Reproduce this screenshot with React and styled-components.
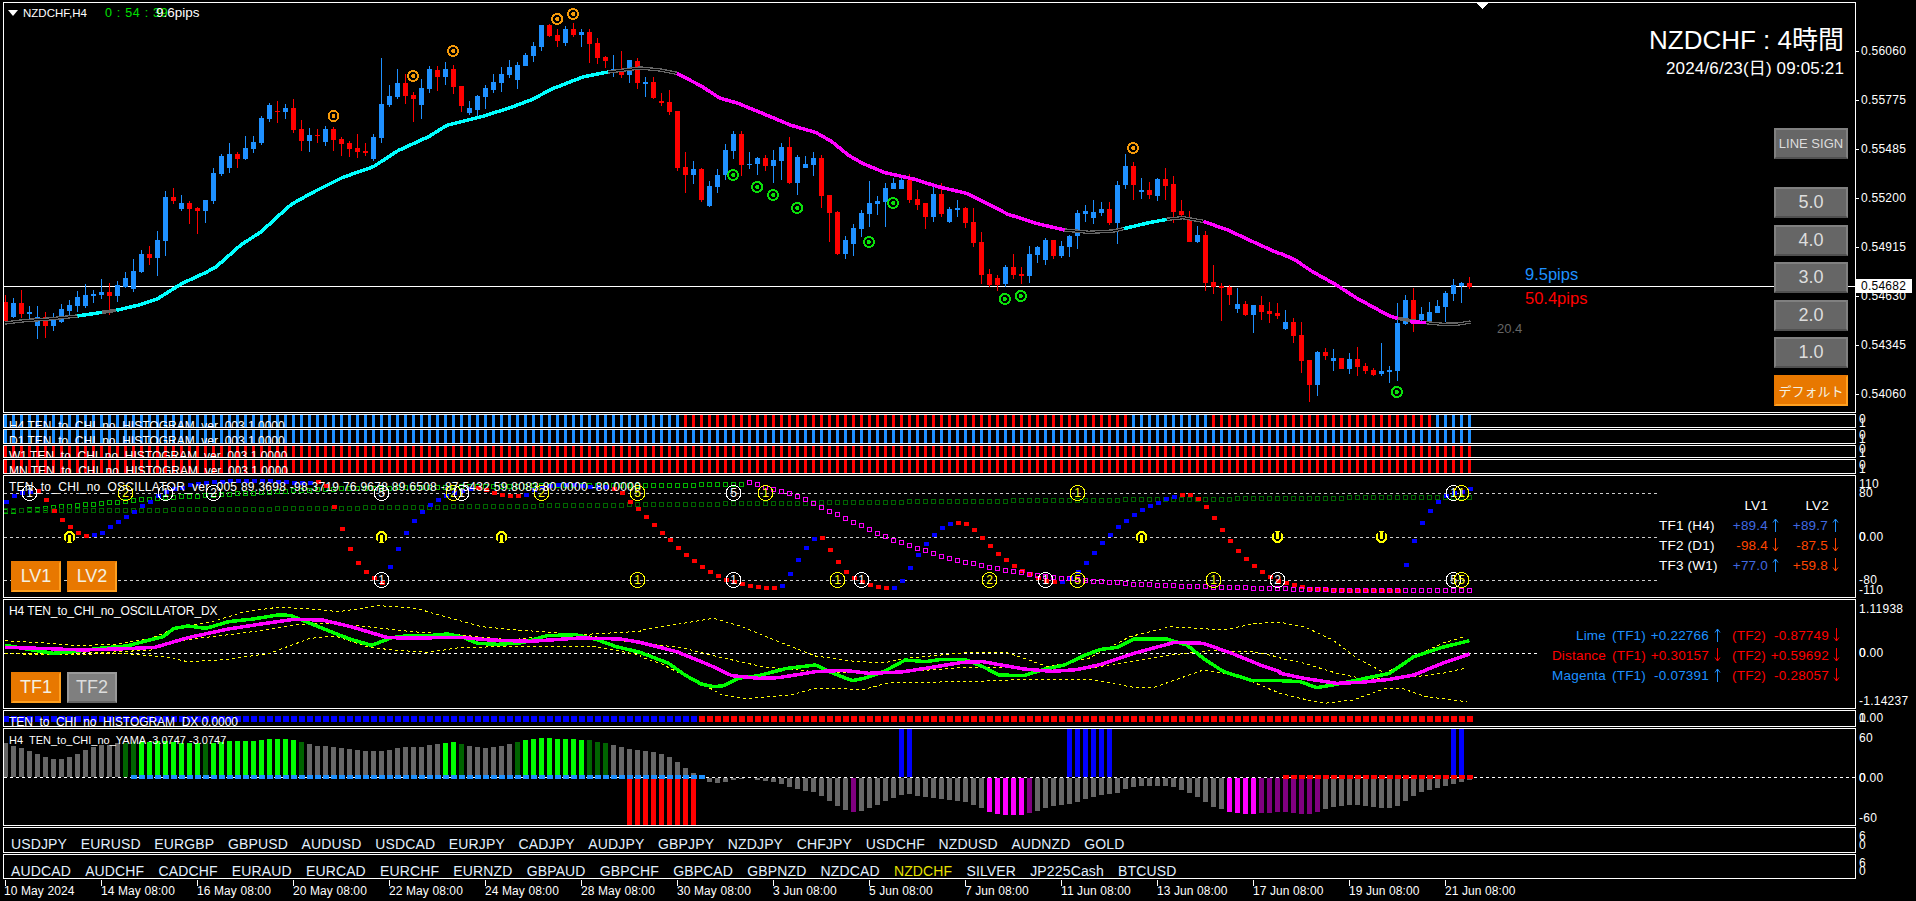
import React from "react";
import styled, { createGlobalStyle } from "styled-components";

const BLUE = "#1e90ff";
const RED = "#ff0000";
const LIME = "#00ff00";
const MAGENTA = "#ff00ff";
const BARS = 184;
const barX = (i) => 5.5 + 8 * i;

// crops of the chart were read at x 2.45 / 2.465 and y 3, keep those numbers in the tables
const SOURCE = { a: [0, 2.45], b: [640, 2.45], c: [1280, 2.465] };
const toScreen = (pts, src, y0 = 0) =>
  pts.map(([x, y]) => [SOURCE[src][0] + x / SOURCE[src][1], y0 + y / 3]);
const pointStr = (pts) => pts.map(([x, y]) => `${x},${y}`).join(" ");
const lerpKeys = (keys, i) => {
  for (let k = 0; k < keys.length - 1; k++) {
    const [i0, v0] = keys[k];
    const [i1, v1] = keys[k + 1];
    if (i >= i0 && i <= i1) return v0 + ((v1 - v0) * (i - i0)) / (i1 - i0);
  }
  return keys[keys.length - 1][1];
};
const inRanges = (ranges, i) => ranges.some(([a, b]) => i >= a && i <= b);

// blue?, high, body top, body bottom, low
const CANDLES = [
  [0,885,905,963,965],[1,895,909,951,955],[0,870,909,942,955],[1,918,936,942,960],[1,918,952,978,1017],[0,936,952,978,1014],[1,940,960,978,995],[1,912,927,965,968],
  [1,900,915,932,945],[1,872,891,918,935],[1,852,885,918,925],[1,870,882,887,908],[1,838,876,885,897],[0,850,876,888,947],[1,842,855,888,905],[1,816,834,860,865],
  [1,778,813,867,877],[1,750,762,816,819],[0,738,762,774,795],[1,693,720,774,828],[1,573,591,723,768],[0,564,591,603,612],[1,585,609,627,632],[0,603,609,627,672],
  [0,622,624,633,702],[1,600,600,633,669],[1,505,519,603,612],[1,462,468,522,528],[1,430,462,504,519],[0,455,462,477,504],[1,408,444,477,480],[1,408,426,447,459],
  [1,348,354,429,435],[1,310,315,357,366],[0,303,333,335,370],[1,312,324,336,357],[0,297,324,390,399],[0,360,387,423,453],[1,384,405,423,456],[0,387,405,407,429],
  [1,378,387,426,438],[0,381,387,420,453],[0,411,417,432,468],[0,423,429,447,471],[0,402,444,456,474],[0,429,453,459,468],[1,402,411,477,483],[1,174,312,414,429],
  [1,255,288,315,321],[1,207,249,291,297],[0,222,249,288,312],[0,276,285,297,366],[1,237,264,315,357],[1,198,207,267,279],[0,198,210,231,273],[1,186,207,231,255],
  [0,195,207,261,282],[0,258,258,318,336],[1,303,324,339,345],[1,285,288,330,348],[1,255,264,291,327],[1,222,246,270,279],[1,201,222,249,276],[1,180,201,225,234],
  [1,186,195,240,267],[1,159,165,198,198],[1,126,138,168,186],[1,75,75,141,153],[0,72,75,108,111],[0,87,105,123,141],[1,78,87,129,138],[0,69,87,105,111],
  [1,87,96,105,141],[0,87,96,132,189],[0,114,129,174,192],[0,168,171,183,204],[1,165,207,213,231],[0,153,216,225,234],[1,180,180,225,249],[0,174,183,250,267],
  [1,231,246,252,291],[0,231,246,294,297],[0,279,303,309,318],[0,270,306,336,345],[0,333,333,504,513],[0,456,501,525,579],[1,483,507,525,552],[0,504,507,600,606],
  [1,543,558,618,621],[1,507,525,561,579],[1,432,450,525,540],[1,393,402,453,477],[0,393,402,495,528],[1,456,492,495,507],[1,471,474,492,525],[0,465,474,498,513],
  [1,450,480,498,549],[1,429,441,483,540],[0,411,441,549,552],[1,465,471,549,585],[1,468,492,504,504],[1,456,474,495,528],[0,465,474,588,624],[0,585,585,639,726],
  [0,633,636,762,765],[1,708,720,762,777],[1,672,684,732,768],[1,630,639,687,711],[1,543,609,642,681],[1,588,603,612,645],[1,549,564,606,681],[1,534,549,567,567],
  [1,531,540,567,567],[0,522,540,600,609],[0,570,597,615,630],[0,609,609,651,687],[1,561,582,651,666],[0,549,582,642,651],[1,621,627,666,669],[1,600,624,630,651],
  [0,621,624,669,684],[0,624,666,729,741],[0,696,726,825,852],[0,807,822,855,861],[0,825,834,855,873],[1,795,801,852,861],[0,762,801,825,837],[0,801,822,828,852],
  [1,738,762,828,849],[1,738,741,765,789],[1,714,720,780,795],[0,720,720,768,777],[1,723,738,768,774],[1,705,708,741,771],[1,630,639,708,747],[1,615,633,642,666],
  [1,600,636,654,672],[1,606,627,639,648],[0,606,627,669,675],[1,543,555,669,732],[1,462,498,555,567],[0,486,498,555,600],[1,534,570,576,597],[0,546,570,585,597],
  [1,534,537,588,603],[0,504,537,558,600],[0,528,552,636,669],[0,600,633,645,651],[0,633,651,726,726],[1,678,705,726,729],[0,693,705,849,873],[0,795,846,861,882],
  [0,849,858,864,963],[0,855,861,885,915],[1,864,912,927,939],[0,903,912,945,948],[1,915,915,945,999],[0,888,915,936,960],[0,906,933,942,969],[0,909,939,948,957],
  [1,930,966,987,990],[0,954,966,1008,1029],[0,966,1005,1083,1119],[0,1080,1080,1155,1206],[1,1053,1056,1155,1188],[0,1044,1056,1068,1080],[1,1047,1074,1083,1113],[0,1074,1074,1107,1107],
  [1,1059,1077,1107,1122],[0,1041,1077,1101,1128],[0,1089,1098,1113,1122],[0,1104,1110,1125,1128],[1,1029,1113,1122,1128],[1,1098,1110,1116,1149],[1,908,969,1113,1143],[1,885,900,972,975],
  [0,864,900,960,996],[1,921,942,960,963],[1,906,936,966,975],[1,900,918,939,939],[1,873,879,921,966],[1,837,855,882,903],[1,846,849,858,909],[0,831,849,861,867],
];

const MA_SECTIONS = [
  ["#666666", "a", [[12,969],[60,962],[120,957],[190,948]], true],
  ["#00ffff", "a", [[190,948],[250,937]]],
  ["#666666", "a", [[250,937],[285,931]]],
  ["#00ffff", "a", [[285,931],[340,915],[385,897],[445,851],[505,817],[530,800],[590,735],[640,695],[680,650],[715,612],[770,575],[840,532],[915,500],[975,452],[1050,410],[1095,376],[1180,350],[1250,323],[1305,298],[1350,268],[1430,230],[1490,216]]],
  ["#666666", "a", [[1490,216],[1568,204]], true],
  ["#666666", "b", [[0,204],[50,210],[90,220]], true],
  [MAGENTA, "b", [[90,220],[150,258],[195,294],[240,310],[300,340],[370,376],[430,397],[470,425],[510,465],[545,490],[600,518],[670,537],[730,560],[800,580],[850,610],[900,642],[970,670],[1040,690]]],
  ["#666666", "b", [[1040,690],[1100,697],[1160,693],[1185,686]], true],
  ["#00ffff", "b", [[1185,686],[1240,670],[1290,658]]],
  ["#666666", "b", [[1290,658],[1330,653],[1380,664]], true],
  [MAGENTA, "b", [[1380,664],[1440,690],[1510,730],[1568,762]]],
  [MAGENTA, "c", [[0,760],[35,778],[80,815],[135,852],[190,895],[270,948],[290,955]]],
  ["#666666", "c", [[290,955],[340,965]]],
  [MAGENTA, "c", [[320,965],[360,968]]],
  ["#666666", "c", [[360,968],[400,973],[440,972],[470,966]], true],
];

const SIGNALS = [
  ["#f59a0a", "a", [[817,348],[1012,228],[1110,153],[1365,57],[1404,42]]],
  ["#f59a0a", "b", [[1208,444]]],
  ["#0be00b", "b", [[228,525],[287,561],[326,585],[385,624],[620,609],[561,726],[894,897],[933,888]]],
  ["#0be00b", "c", [[288,1176]]],
];

const OSC_MAIN = [
  275,259,250,245,243,271,304,331,352,370,379,376,368,352,337,322,306,289,275,259,245,238,233,226,221,219,217,215,213,213,213,213,213,214,215,216,218,219,219,215,
  228,290,358,418,460,487,505,518,472,418,370,334,307,286,271,259,250,243,238,234,240,250,254,257,257,254,240,234,228,225,225,226,228,232,232,232,236,250,275,298,
  322,346,370,391,415,436,454,472,487,499,511,517,523,529,532,535,535,529,493,451,415,388,385,421,457,487,505,517,526,532,535,535,514,475,436,403,376,355,343,340,
  343,361,385,409,433,451,469,484,493,505,514,517,517,505,487,460,430,400,376,352,334,316,301,289,280,268,262,256,256,268,292,325,361,394,424,448,469,487,502,512,
  520,525,530,537,538,540,541,541,543,544,544,544,544,544,544,466,394,340,304,277,259,250,245,236,
];
const OSC_RED = [[4,10],[39,47],[59,64],[76,96],[102,110],[119,131],[147,174]];
const OSC_MAGENTA = [
  217,223,232,238,244,250,259,268,280,292,304,313,325,337,346,358,370,379,391,397,406,415,421,430,439,445,451,457,460,466,472,475,481,484,487,493,496,499,502,505,505,508,511,514,514,517,517,520,523,523,523,526,526,526,529,529,529,529,532,532,532,532,532,535,535,535,535,
  535,536,536,537,537,538,539,540,540,541,541,541,541,541,541,541,541,541,541,541,541,541,541,541,
];
const OSC_BRIGHT = [[0,298],[10,277],[20,256],[30,243],[40,230],[60,222],[70,219],[92,217]];
const OSC_DARK_STEPS = [
  [20,295],[33,292],[44,289],[55,286],[66,283],[77,280],[89,277],[100,274],[112,271],[125,268],[139,265],[153,262],[167,259],[183,256],
];
const OSC_RINGS = [
  [3,1,"#fff","1"],[15,1,"#ff0","2"],[20,1,"#fff","1"],[26,1,"#fff","2"],[47,1,"#fff","5"],[56,1,"#ff0","2"],[57,1,"#fff","1"],[67,1,"#ff0","2"],[79,1,"#ff0","5"],
  [91,1,"#fff","5"],[95,1,"#ff0","1"],[134,1,"#ff0","1"],[181,1,"#fff","1"],[182,1,"#ff0","1"],
  [47,-1,"#fff","1"],[79,-1,"#ff0","1"],[91,-1,"#fff","1"],[104,-1,"#ff0","1"],[107,-1,"#fff","1"],[123,-1,"#ff0","2"],[130,-1,"#fff","1"],[134,-1,"#ff0","5"],
  [151,-1,"#ff0","1"],[159,-1,"#fff","2"],[181,-1,"#fff","5"],[182,-1,"#ff0","5"],
];
const OSC_ARROWS = [[8,0],[47,0],[62,0],[142,0],[159,1],[172,1]];

const DX_LIME = [
  ["a",[[12,706],[80,720],[130,730],[180,725],[250,714],[310,708],[360,692],[400,680],[425,656],[460,648],[505,655],[560,635],[620,627],[680,615],[710,616],[750,635],[810,665],[860,688],[910,706],[960,683],[1000,677],[1050,677],[1095,672],[1130,680],[1170,700],[1220,703],[1280,698],[1340,677],[1410,674],[1460,688],[1510,710],[1568,727]]],
  ["b",[[0,727],[70,760],[110,795],[150,822],[180,830],[205,827],[240,805],[290,797],[360,775],[430,765],[470,788],[520,812],[550,805],[600,783],[650,750],[700,755],[740,748],[800,750],[840,770],[880,795],[940,797],[990,778],[1040,765],[1090,735],[1130,718],[1170,712],[1210,687],[1290,687],[1340,705],[1380,745],[1430,785],[1500,812],[1568,811]]],
  ["c",[[0,812],[50,815],[90,833],[130,825],[190,810],[270,790],[330,740],[400,712],[467,692]]],
];
const DX_MAGENTA = [
  ["a",[[12,712],[120,716],[200,720],[310,716],[380,712],[460,683],[560,657],[640,642],[720,628],[790,630],[860,650],[950,683],[1020,684],[1130,682],[1200,690],[1300,694],[1420,684],[1520,687],[1568,697]]],
  ["b",[[0,697],[90,725],[170,765],[225,797],[290,805],[340,803],[430,785],[500,781],[560,790],[640,786],[700,775],[790,757],[840,755],[940,777],[1010,784],[1070,779],[1130,763],[1210,730],[1310,697],[1380,700],[1450,730],[1520,765],[1568,785]]],
  ["c",[[0,790],[60,805],[140,820],[200,817],[270,808],[330,795],[400,760],[467,732]]],
];
const DX_BANDS = [
  [
    ["a",[[12,692],[100,698],[190,707],[290,702],[370,685],[420,660],[460,648],[520,635],[600,605],[680,592],[760,597],[830,605],[930,587],[1020,595],[1090,620],[1180,650],[1270,660],[1420,674],[1568,664]]],
    ["b",[[0,660],[80,645],[180,625],[250,650],[340,695],[430,738],[530,755],[600,758],[650,745],[800,728],[900,728],[1000,770],[1100,745],[1200,680],[1300,650],[1430,660],[1510,640],[1568,637]]],
    ["c",[[0,637],[60,650],[130,690],[190,745],[260,790],[330,740],[400,700],[455,680]]],
  ],
  [
    ["a",[[12,730],[150,730],[250,728],[370,720],[420,695],[520,680],[620,665],[720,645],[800,640],[900,650],[1010,665],[1130,675],[1250,690],[1400,670],[1568,700]]],
    ["b",[[0,700],[100,712],[190,740],[300,770],[430,785],[560,790],[650,785],[800,772],[900,772],[1000,785],[1100,775],[1200,755],[1300,735],[1400,722],[1500,725],[1568,742]]],
    ["c",[[0,745],[60,760],[140,790],[200,805],[300,805],[400,790],[455,775]]],
  ],
  [
    ["a",[[12,730],[120,735],[300,730],[400,740],[460,755],[560,748],[660,730],[760,685],[820,678],[900,710],[960,720],[1050,727],[1130,712],[1250,710],[1450,708],[1568,735]]],
    ["b",[[0,740],[50,760],[130,810],[180,840],[200,855],[260,866],[370,855],[430,835],[550,838],[610,818],[800,815],[950,808],[1100,808],[1210,832],[1260,832],[1380,780],[1460,795],[1568,850]]],
    ["c",[[0,850],[50,865],[110,880],[180,870],[260,835],[300,835],[360,860],[460,875]]],
  ],
];

const YAMA_UP = [
  130,138,145,153,162,170,177,177,170,162,150,141,135,135,130,130,127,126,126,123,123,126,129,129,129,130,129,126,123,123,123,123,120,117,117,117,120,125,132,138,138,141,144,147,150,153,153,153,150,144,141,141,141,135,132,129,126,132,138,141,144,141,138,132,126,120,117,114,114,117,117,117,120,120,126,129,135,141,147,150,153,156,162,171,186,204,219,
];
const YAMA_LIME = [[17,24],[26,36],[55,56],[65,72]];
const YAMA_DARK = [[15,16],[25,25],[37,37],[57,57],[64,64],[73,75]];
const YAMA_DOWN = [
  246,248,246,240,236,235,240,244,246,252,260,268,274,276,288,303,318,330,335,333,324,316,303,294,285,283,287,292,294,298,300,303,306,315,324,336,342,345,345,345,339,332,324,318,315,312,306,297,291,285,282,279,267,261,258,258,258,258,261,270,279,291,306,321,327,336,339,342,342,339,339,336,336,339,342,342,336,327,321,318,315,315,318,321,324,324,318,303,288,276,270,264,258,252,246,240,
];
const YAMA_MAGENTA = [[123,127],[153,156]];
const YAMA_PURPLE = [[106,106],[128,128],[157,164]];
const YAMA_BLUE = [[112,113],[133,138],[181,182]];

const ROW_ONE = ["USDJPY","EURUSD","EURGBP","GBPUSD","AUDUSD","USDCAD","EURJPY","CADJPY","AUDJPY","GBPJPY","NZDJPY","CHFJPY","USDCHF","NZDUSD","AUDNZD","GOLD"];
const ROW_TWO = ["AUDCAD","AUDCHF","CADCHF","EURAUD","EURCAD","EURCHF","EURNZD","GBPAUD","GBPCHF","GBPCAD","GBPNZD","NZDCAD","NZDCHF","SILVER","JP225Cash","BTCUSD"];
const TIMES = ["10 May 2024","14 May 08:00","16 May 08:00","20 May 08:00","22 May 08:00","24 May 08:00","28 May 08:00","30 May 08:00","3 Jun 08:00","5 Jun 08:00","7 Jun 08:00","11 Jun 08:00","13 Jun 08:00","17 Jun 08:00","19 Jun 08:00","21 Jun 08:00"];
const PRICES = [[50.6,"0.56060",5],[99.6,"0.55775",5],[148.7,"0.55485",5],[197.7,"0.55200",5],[246.7,"0.54915",5],[295.7,"0.54630",5],[344.7,"0.54345",5],[393.7,"0.54060",5]];

const GlobalStyle = createGlobalStyle`
  html, body {
    margin: 0;
    height: 100%;
    overflow: hidden;
    background: #000;
  }
`;

const Terminal = styled.div`
  width: 1916px;
  height: 901px;
  padding: 2px 0 0 3px;
  box-sizing: border-box;
  display: flex;
  flex-direction: column;
  gap: 1px;
  background: #000;
  color: #fff;
  font-family: "Liberation Sans", "Noto Sans CJK JP", sans-serif;
  font-size: 12px;
  overflow: hidden;
`;

const Row = styled.div`
  display: flex;
  height: ${(p) => p.$h}px;
  flex: none;
`;

const Pane = styled.div`
  position: relative;
  width: 1853px;
  flex: none;
  box-sizing: border-box;
  border: 1px solid #fff;
  overflow: hidden;
`;

const Scale = styled.div`
  position: relative;
  flex: 1;
`;

const ScaleLabel = styled.span`
  position: absolute;
  left: ${(p) => p.$x || 3}px;
  top: ${(p) => p.$y}px;
  transform: translateY(-50%);
  line-height: 14px;
  letter-spacing: 0.25px;
  white-space: nowrap;
  &::before {
    content: "";
    display: ${(p) => (p.$tick ? "block" : "none")};
    position: absolute;
    left: -5px;
    top: 7px;
    width: 3px;
    height: 1px;
    background: #fff;
  }
`;

const PriceTag = styled.span`
  position: absolute;
  left: 0;
  top: 277px;
  width: 56px;
  height: 14px;
  padding-left: 5px;
  box-sizing: border-box;
  line-height: 14px;
  letter-spacing: 0.25px;
  background: #fff;
  color: #000;
`;

const ChartSvg = styled.svg`
  display: block;
  shape-rendering: crispEdges;
`;

const RingDigit = styled.text`
  font-family: "Liberation Sans", sans-serif;
  font-size: 12px;
  text-anchor: middle;
`;

const PaneTitle = styled.span`
  position: absolute;
  left: 5px;
  top: ${(p) => p.$top}px;
  font-size: ${(p) => p.$size || 12}px;
  line-height: 14px;
  letter-spacing: ${(p) => p.$spacing ?? 0}px;
  white-space: pre;
`;

const SymbolInfo = styled.div`
  position: absolute;
  left: 4px;
  top: 3px;
  display: flex;
  align-items: center;
  line-height: 14px;
`;

const SymbolArrow = styled.i`
  width: 0;
  height: 0;
  border-left: 5px solid transparent;
  border-right: 5px solid transparent;
  border-top: 6px solid #fff;
  margin-right: 5px;
`;

const SymbolName = styled.span`
  font-size: 11.5px;
  width: 82px;
`;

const Countdown = styled.span`
  color: #00e000;
  font-size: 12.5px;
  letter-spacing: 0.7px;
  width: 51px;
  white-space: nowrap;
`;

const PipsTop = styled.span`
  font-size: 13.5px;
`;

const TitleBlock = styled.div`
  position: absolute;
  right: 11px;
  top: 22px;
  display: flex;
  flex-direction: column;
  align-items: flex-end;
`;

const Title = styled.div`
  font-size: 26px;
  line-height: 30px;
`;

const DateLine = styled.div`
  font-size: 17px;
  line-height: 18px;
  letter-spacing: 0.15px;
  margin-top: 5px;
`;

const PipNote = styled.span`
  position: absolute;
  left: ${(p) => p.$x}px;
  top: ${(p) => p.$y}px;
  color: ${(p) => p.$color};
  font-size: ${(p) => p.$size}px;
  line-height: 20px;
`;

const ButtonStack = styled.div`
  position: absolute;
  right: 7px;
  top: 125px;
  display: flex;
  flex-direction: column;
  gap: 6.5px;
`;

const Button = styled.div`
  width: ${(p) => p.$w || 74}px;
  height: 31px;
  box-sizing: border-box;
  display: flex;
  align-items: center;
  justify-content: center;
  font-size: ${(p) => p.$size || 18}px;
  border-style: solid;
  border-width: 2px;
  margin-bottom: ${(p) => (p.$spaced ? 21.5 : 0)}px;
  ${(p) =>
    p.$tone === "orange"
      ? `background: #e87800; color: #f4f0e0; border-color: #e87800 #ffa020 #ffa020 #e87800;`
      : p.$tone === "light"
      ? `background: #7f7f7f; color: #ddd; border-color: #999 #999 #666 #999;`
      : `background: #666; color: #ddd; border-color: #808080 #808080 #505050 #808080;`}
`;

const ToggleRow = styled.div`
  position: absolute;
  left: 7px;
  bottom: ${(p) => p.$bottom}px;
  display: flex;
  gap: 6px;
`;

const OscLegend = styled.div`
  position: absolute;
  left: 1655px;
  top: 19px;
  display: grid;
  grid-template-columns: 72px 48px 60px;
  grid-auto-rows: 20px;
  align-items: center;
  font-size: 13.5px;
  letter-spacing: 0.2px;
`;

const LegendHead = styled.span`
  justify-self: end;
  margin-right: ${(p) => p.$mr}px;
`;

const LegendValue = styled.span`
  display: flex;
  justify-content: flex-end;
  align-items: center;
  gap: 4px;
  color: ${(p) => p.$color};
  white-space: nowrap;
`;

const ThinArrow = styled.svg`
  flex: none;
  width: 7px;
  height: 14px;
  stroke: ${(p) => p.$color};
  fill: none;
`;

const DxLegend = styled.div`
  position: absolute;
  right: 15px;
  top: 25px;
  display: grid;
  grid-template-columns: auto 40px 63px 12px 45px 63px 11px;
  grid-auto-rows: 20px;
  align-items: center;
  font-size: 13.5px;
`;

const DxCell = styled.span`
  color: ${(p) => p.$color};
  justify-self: end;
  letter-spacing: 0.2px;
  display: flex;
  align-items: center;
  white-space: nowrap;
`;

const SymbolStrip = styled.div`
  display: flex;
  gap: ${(p) => p.$gap}px;
  padding: 8px 0 0 7px;
  font-size: 14px;
  line-height: 16px;
  letter-spacing: 0.14px;
  color: #e2f0ff;
`;

const SymbolItem = styled.span`
  color: ${(p) => (p.$active ? "#e6e000" : "inherit")};
`;

const TimeAxis = styled.div`
  display: grid;
  grid-template-columns: repeat(16, 96px);
`;

const TimeCell = styled.div`
  position: relative;
  padding: 4px 0 0 ${(p) => (p.$first ? 1 : 2)}px;
  line-height: 14px;
  letter-spacing: 0.1px;
  white-space: nowrap;
  &::before {
    content: "";
    position: absolute;
    left: 2px;
    top: 0;
    width: 1px;
    height: 6px;
    background: #fff;
  }
`;

const View = ({ top, h, children }) => (
  <ChartSvg width={1851} height={h} viewBox={`4 ${top} 1851 ${h}`}>
    {children}
  </ChartSvg>
);

const Labels = ({ top, items, tick }) =>
  items.map(([y, text, x], i) => (
    <ScaleLabel key={i} $y={y - top} $x={x} $tick={tick}>
      {text}
    </ScaleLabel>
  ));

const UpDown = ({ color, down }) => (
  <ThinArrow $color={color} viewBox="0 0 7 14">
    {down ? <path d="M3.5 0V13M1 9.5L3.5 13L6 9.5" /> : <path d="M3.5 14V1M1 4.5L3.5 1L6 4.5" />}
  </ThinArrow>
);

function MainChart() {
  return (
    <View top={3} h={409}>
      <rect x={4} y={286} width={1851} height={1} fill="#fff" />
      <polygon points="1476,3 1488,3 1482,9" fill="#fff" />
      {CANDLES.map(([up, high, bodyTop, bodyBottom, low], i) => {
        const color = up ? BLUE : RED;
        const t = Math.round(bodyTop / 3);
        const b = Math.max(Math.round(bodyBottom / 3), t + 1);
        return (
          <g key={i} fill={color}>
            <rect x={barX(i) - 0.5} y={Math.round(high / 3)} width={1} height={Math.round((low - high) / 3)} />
            <rect x={barX(i) - 2.5} y={t} width={5} height={b - t} />
          </g>
        );
      })}
      {MA_SECTIONS.map(([color, src, pts, hollow], i) => {
        const line = pointStr(toScreen(pts, src));
        return (
          <g key={i} fill="none" strokeLinejoin="round">
            <polyline points={line} stroke={color} strokeWidth={3.5} />
            {hollow && <polyline points={line} stroke="#000" strokeWidth={1} />}
          </g>
        );
      })}
      {SIGNALS.map(([color, src, pts]) =>
        toScreen(pts, src).map(([x, y]) => (
          <g key={`${x}-${y}`}>
            <circle cx={x} cy={y} r={5} fill="none" stroke={color} strokeWidth={2} />
            <circle cx={x} cy={y} r={2} fill={color} />
          </g>
        ))
      )}
    </View>
  );
}

function HistogramStrip({ top, h, red }) {
  return (
    <View top={top} h={h}>
      {Array.from({ length: BARS }, (_, i) => (
        <rect key={i} x={barX(i) - 1.5} y={top} width={3} height={h} fill={red(i) ? RED : BLUE} />
      ))}
    </View>
  );
}

function Oscillator() {
  const rowY = { 1: 493, 0: 537, "-1": 580 };
  return (
    <View top={476} h={121}>
      {[493, 537, 580].map((y) => (
        <line key={y} x1={4} x2={1659} y1={y + 0.5} y2={y + 0.5} stroke="#ccc" strokeDasharray="3 3" />
      ))}
      {Array.from({ length: 93 }, (_, i) => (
        <rect key={i} x={barX(i) - 2} y={Math.round(410 + lerpKeys(OSC_BRIGHT, i) / 3) + 0.5} width={4} height={4} fill="none" stroke="#00b400" />
      ))}
      {Array.from({ length: BARS }, (_, i) => {
        const step = OSC_DARK_STEPS.find(([end]) => i <= end);
        return <rect key={i} x={barX(i) - 2} y={Math.round(410 + step[1] / 3) + 0.5} width={4} height={4} fill="none" stroke="#006400" />;
      })}
      {OSC_MAIN.map((y, i) => (
        <rect key={i} x={barX(i) - 2} y={Math.round(410 + y / 3) - 2} width={5} height={4} fill={inRanges(OSC_RED, i) ? RED : "#0000ff"} />
      ))}
      {OSC_MAGENTA.map((y, i) => (
        <rect key={i} x={barX(i + 93) - 2} y={Math.round(410 + y / 3) - 1.5} width={4} height={4} fill="none" stroke={MAGENTA} />
      ))}
      {OSC_ARROWS.map(([i, down]) => (
        <g key={i} transform={`translate(${barX(i)} 537) scale(1 ${down ? -1 : 1})`}>
          <circle r={6} fill="#ff0" />
          <path d="M-2.5 5V-0.5A2.5 2.5 0 0 1 2.5 -0.5V5" fill="none" stroke="#000" strokeWidth={1.5} />
        </g>
      ))}
      {OSC_RINGS.map(([i, row, color, digit]) => (
        <g key={`${i}${row}`}>
          <circle cx={barX(i)} cy={rowY[row]} r={7.5} fill="none" stroke={color} />
          <RingDigit x={barX(i)} y={rowY[row] + 4} fill={color}>
            {digit}
          </RingDigit>
        </g>
      ))}
    </View>
  );
}

function DxChart() {
  const toLine = (parts) => pointStr(parts.flatMap(([src, pts]) => toScreen(pts, src, 410)));
  return (
    <View top={600} h={108}>
      <line x1={4} x2={1540} y1={653.5} y2={653.5} stroke="#fff" strokeDasharray="3 3" />
      {DX_BANDS.map((band, i) => (
        <polyline key={i} points={toLine(band)} fill="none" stroke="#ffff00" strokeDasharray="3 3" />
      ))}
      <polyline points={toLine(DX_LIME)} fill="none" stroke={LIME} strokeWidth={3.5} strokeLinejoin="round" />
      <polyline points={toLine(DX_MAGENTA)} fill="none" stroke={MAGENTA} strokeWidth={3.5} strokeLinejoin="round" />
    </View>
  );
}

function DxStrip() {
  return (
    <View top={711} h={15}>
      {Array.from({ length: BARS }, (_, i) => (
        <rect key={i} x={barX(i) - 2.5} y={716} width={6} height={6} fill={i < 87 ? "#0000ff" : RED} />
      ))}
    </View>
  );
}

function YamaChart() {
  return (
    <View top={729} h={96}>
      <line x1={4} x2={1855} y1={777.5} y2={777.5} stroke="#fff" strokeDasharray="3 3" />
      {YAMA_UP.map((v, i) => {
        const top = Math.round(700 + v / 3);
        const color = inRanges(YAMA_LIME, i) ? LIME : inRanges(YAMA_DARK, i) ? "#006400" : "#666";
        return <rect key={i} x={barX(i) - 2.5} y={top} width={5} height={777 - top} fill={color} />;
      })}
      {YAMA_DOWN.map((v, n) => {
        const i = n + 88;
        const bottom = Math.round(700 + v / 3);
        const color = inRanges(YAMA_MAGENTA, i) ? MAGENTA : inRanges(YAMA_PURPLE, i) ? "#800080" : "#666";
        return <rect key={i} x={barX(i) - 2.5} y={778} width={5} height={bottom - 778} fill={color} />;
      })}
      {Array.from({ length: 9 }, (_, n) => (
        <rect key={n} x={barX(n + 78) - 2.5} y={779} width={5} height={46} fill={RED} />
      ))}
      {Array.from({ length: BARS }, (_, i) =>
        inRanges(YAMA_BLUE, i) ? <rect key={i} x={barX(i) - 2.5} y={729} width={5} height={48} fill="#0000ff" /> : null
      )}
      {Array.from({ length: 72 }, (_, n) => (
        <rect key={n} x={barX(n + 16) - 3} y={775} width={6} height={4} fill={BLUE} />
      ))}
      {Array.from({ length: 24 }, (_, n) => (
        <rect key={n} x={barX(n + 160) - 3} y={775} width={6} height={4} fill={RED} />
      ))}
    </View>
  );
}

const h4Blue = [[0, 84], [141, 150], [179, 183]];
const STRIPS = [
  { name: "H4", top: 415, h: 12, outer: 14, labelTop: 4, red: (i) => !inRanges(h4Blue, i), scale: [[419, "0"], [423, "1"]] },
  { name: "D1", top: 430, h: 13, outer: 15, labelTop: 4, red: () => false, scale: [[435, "0"], [439, "1"]] },
  { name: "W1", top: 446, h: 11, outer: 13, labelTop: 3, red: () => true, scale: [[449, "0"], [453, "1"]] },
  { name: "MN", top: 460, h: 13, outer: 15, labelTop: 4, red: () => true, scale: [[465, "0"], [469, "1"]] },
];

const OSC_ROWS = [
  ["TF1 (H4)", ["+89.4", 0, 0], ["+89.7", 0, 0]],
  ["TF2 (D1)", ["-98.4", 1, 1], ["-87.5", 1, 1]],
  ["TF3 (W1)", ["+77.0", 0, 0], ["+59.8", 1, 1]],
];
const DX_ROWS = [
  ["Lime", BLUE, "+0.22766", BLUE, false, "-0.87749"],
  ["Distance", RED, "+0.30157", RED, true, "+0.59692"],
  ["Magenta", BLUE, "-0.07391", BLUE, false, "-0.28057"],
];

export default function App() {
  return (
    <Terminal>
      <GlobalStyle />
      <Row $h={411}>
        <Pane>
          <MainChart />
          <SymbolInfo>
            <SymbolArrow />
            <SymbolName>NZDCHF,H4</SymbolName>
            <Countdown>0 : 54 : 39</Countdown>
            <PipsTop>9.6pips</PipsTop>
          </SymbolInfo>
          <TitleBlock>
            <Title>NZDCHF : 4時間</Title>
            <DateLine>2024/6/23(日) 09:05:21</DateLine>
          </TitleBlock>
          <PipNote $x={1521} $y={261} $color={BLUE} $size={16.5}>9.5pips</PipNote>
          <PipNote $x={1521} $y={285} $color={RED} $size={16.5}>50.4pips</PipNote>
          <PipNote $x={1493} $y={316} $color="#666" $size={13}>20.4</PipNote>
          <ButtonStack>
            <Button $size={13} $spaced>LINE SIGN</Button>
            <Button>5.0</Button>
            <Button>4.0</Button>
            <Button>3.0</Button>
            <Button>2.0</Button>
            <Button>1.0</Button>
            <Button $tone="orange" $size={13}>デフォルト</Button>
          </ButtonStack>
        </Pane>
        <Scale>
          <Labels top={2} items={PRICES} tick />
          <PriceTag>0.54682</PriceTag>
        </Scale>
      </Row>

      {STRIPS.map((s) => (
        <Row key={s.name} $h={s.outer}>
          <Pane>
            <HistogramStrip top={s.top} h={s.h} red={s.red} />
            <PaneTitle $top={s.labelTop}>{s.name} TEN_to_CHI_no_HISTOGRAM_ver_003 1.0000</PaneTitle>
          </Pane>
          <Scale>
            <Labels top={s.top - 1} items={s.scale} />
          </Scale>
        </Row>
      ))}

      <Row $h={123}>
        <Pane>
          <Oscillator />
          <PaneTitle $top={4} $spacing={0.27}>TEN_to_CHI_no_OSCILLATOR_ver_005 89.3698 -98.3719 76.9678 89.6508 -87.5432 59.8083 80.0000 -80.0000</PaneTitle>
          <ToggleRow $bottom={5}>
            <Button $tone="orange" $w={50}>LV1</Button>
            <Button $tone="orange" $w={50}>LV2</Button>
          </ToggleRow>
          <OscLegend>
            <span />
            <LegendHead $mr={11}>LV1</LegendHead>
            <LegendHead $mr={10}>LV2</LegendHead>
            {OSC_ROWS.map(([label, a, b]) => (
              <React.Fragment key={label}>
                <span>{label}</span>
                {[a, b].map(([value, neg]) => (
                  <LegendValue key={value} $color={neg ? "#ff4500" : "#4169e1"}>
                    {value}
                    <UpDown color={neg ? "#ff4500" : BLUE} down={!!neg} />
                  </LegendValue>
                ))}
              </React.Fragment>
            ))}
          </OscLegend>
        </Pane>
        <Scale>
          <Labels
            top={475}
            items={[[484.3, "110"], [493.3, "80"], [537.3, "0.00"], [537.3, "0"], [580.3, "-80"], [589.7, "-110"]]}
          />
        </Scale>
      </Row>

      <Row $h={110}>
        <Pane>
          <DxChart />
          <PaneTitle $top={4} $spacing={-0.1}>H4 TEN_to_CHI_no_OSCILLATOR_DX</PaneTitle>
          <ToggleRow $bottom={5}>
            <Button $tone="orange" $w={50}>TF1</Button>
            <Button $tone="light" $w={50}>TF2</Button>
          </ToggleRow>
          <DxLegend>
            {DX_ROWS.map(([name, color, v1, arrow, down, v2]) => (
              <React.Fragment key={name}>
                <DxCell $color={color}>{name}</DxCell>
                <DxCell $color={color}>(TF1)</DxCell>
                <DxCell $color={color}>{v1}</DxCell>
                <DxCell><UpDown color={arrow} down={down} /></DxCell>
                <DxCell $color={RED}>(TF2)</DxCell>
                <DxCell $color={RED}>{v2}</DxCell>
                <DxCell><UpDown color={RED} down /></DxCell>
              </React.Fragment>
            ))}
          </DxLegend>
        </Pane>
        <Scale>
          <Labels top={599} items={[[608.7, "1.11938"], [653.3, "0.00"], [653.3, "0"], [700.7, "-1.14237"]]} />
        </Scale>
      </Row>

      <Row $h={17}>
        <Pane>
          <DxStrip />
          <PaneTitle $top={4} $spacing={-0.05}>TEN_to_CHI_no_HISTOGRAM_DX 0.0000</PaneTitle>
        </Pane>
        <Scale>
          <Labels top={710} items={[[718.3, "0.00"], [718.3, "1"]]} />
        </Scale>
      </Row>

      <Row $h={98}>
        <Pane>
          <YamaChart />
          <PaneTitle $top={4} $size={11}>H4  TEN_to_CHI_no_YAMA -3.0747 -3.0747</PaneTitle>
        </Pane>
        <Scale>
          <Labels top={728} items={[[737.7, "60"], [777.7, "0.00"], [777.7, "0"], [817.7, "-60"]]} />
        </Scale>
      </Row>

      <Row $h={26}>
        <Pane>
          <SymbolStrip $gap={13.67}>
            {ROW_ONE.map((s) => <SymbolItem key={s}>{s}</SymbolItem>)}
          </SymbolStrip>
        </Pane>
        <Scale>
          <Labels top={827} items={[[836.3, "6"], [845, "0"]]} />
        </Scale>
      </Row>

      <Row $h={25}>
        <Pane>
          <SymbolStrip $gap={14.16}>
            {ROW_TWO.map((s) => <SymbolItem key={s} $active={s === "NZDCHF"}>{s}</SymbolItem>)}
          </SymbolStrip>
        </Pane>
        <Scale>
          <Labels top={854} items={[[863, "6"], [871, "0"]]} />
        </Scale>
      </Row>

      <TimeAxis>
        {TIMES.map((t, i) => (
          <TimeCell key={t} $first={i === 0}>{t}</TimeCell>
        ))}
      </TimeAxis>
    </Terminal>
  );
}
